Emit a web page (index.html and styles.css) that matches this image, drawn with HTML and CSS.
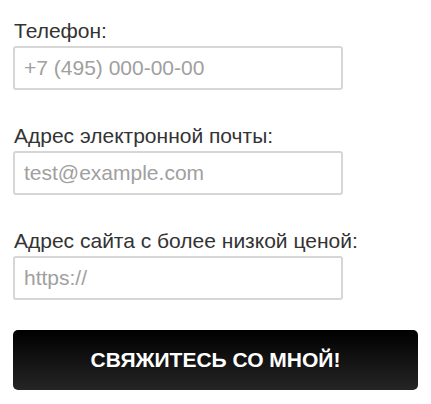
FILE: index.html
```html
<!DOCTYPE html>
<html lang="ru">
<head>
    <meta charset="UTF-8">
    <meta name="viewport" content="width=device-width, initial-scale=1.0">
    <title>Обратная связь</title>
    <link rel="stylesheet" href="styles.css">
</head>
<body>
    <form class="callback-form">
        <div class="field">
            <label for="phone">Телефон:</label>
            <input type="text" id="phone" placeholder="+7 (495) 000-00-00">
        </div>
        <div class="field">
            <label for="email">Адрес электронной почты:</label>
            <input type="text" id="email" placeholder="test@example.com">
        </div>
        <div class="field">
            <label for="site">Адрес сайта с более низкой ценой:</label>
            <input type="text" id="site" placeholder="https://">
        </div>
        <button type="button" class="submit-btn">СВЯЖИТЕСЬ СО МНОЙ!</button>
    </form>
</body>
</html>
```

FILE: styles.css
```css
body {
    margin: 0;
    background: #fff;
    font-family: "Liberation Sans", Arial, sans-serif;
    color: #333;
}
.callback-form {
    padding: 19px 13px 0 13px;
}
.field {
    margin-bottom: 34px;
}
.field label {
    display: block;
    font-size: 21px;
    line-height: 24px;
    padding-left: 1px;
    margin-bottom: 3px;
}
.field input {
    display: block;
    box-sizing: border-box;
    width: 330px;
    height: 44px;
    padding: 0 9px;
    border: 2px solid #d6d6d6;
    border-radius: 3px;
    font-family: inherit;
    font-size: 21px;
    color: #333;
    outline: none;
}
.field input::placeholder {
    color: #a0a0a0;
}
.submit-btn {
    display: block;
    width: 405px;
    height: 60px;
    margin-top: -4px;
    border: none;
    border-radius: 5px;
    background: linear-gradient(to bottom, #000 0%, #252525 100%);
    color: #fff;
    font-family: inherit;
    font-size: 21px;
    font-weight: bold;
    cursor: pointer;
}
```
